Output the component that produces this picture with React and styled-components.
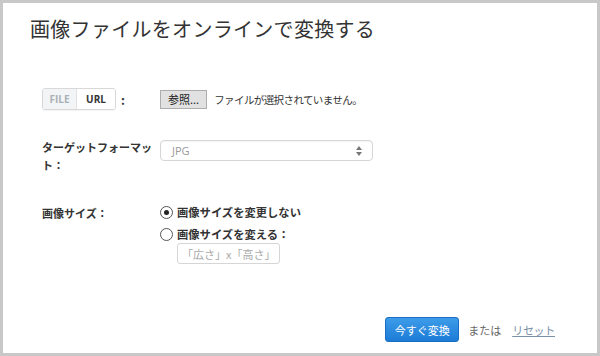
import React from 'react'
import styled, { createGlobalStyle } from 'styled-components'

const Global = createGlobalStyle`
  html, body { margin: 0; padding: 0; background: #fff; }
  body { font-family: "Open Sans", "Noto Sans CJK JP", sans-serif; color: #333; }
`

const Frame = styled.div`
  box-sizing: border-box;
  width: 600px;
  height: 356px;
  border: 3px solid #c8c8c8;
  background: #fff;
  display: flex;
  flex-direction: column;
`

const Title = styled.h1`
  margin: 0;
  padding: 12px 0 0 27px;
  font-size: 20px;
  line-height: 28px;
  font-weight: 400;
  color: #333;
  font-family: "Noto Sans CJK JP", sans-serif;
  letter-spacing: 0.3px;
`

const Form = styled.div`
  display: flex;
  flex-direction: column;
  padding: 45px 0 0 39px;
  flex: 1;
`

const Row = styled.div`
  display: grid;
  grid-template-columns: 118px 1fr;
  align-items: ${p => p.$align || 'center'};
  margin-bottom: ${p => p.$gap || 0}px;
`

const Label = styled.div`
  font-family: "Noto Sans CJK JP", sans-serif;
  font-size: 11px;
  font-weight: 700;
  line-height: 18px;
  color: #333;
  white-space: nowrap;
`

const Toggle = styled.div`
  display: flex;
  align-items: center;
  gap: 5px;
`

const Switch = styled.div`
  display: flex;
  border: 1px solid #d8d8d8;
  border-radius: 3px;
  overflow: hidden;
  height: 20px;
  box-shadow: 0 1px 1px rgba(0,0,0,0.05);
`

const SwitchPart = styled.span`
  display: flex;
  align-items: center;
  justify-content: center;
  width: ${p => p.$w}px;
  font-size: 10px;
  font-weight: 700;
  color: ${p => (p.$active ? '#333' : '#a9b0b8')};
  background: ${p => (p.$active ? '#fff' : '#f3f4f5')};
  border-left: ${p => (p.$active ? '1px solid #e2e2e2' : 'none')};
`

const Colon = styled.span`
  font-family: "Noto Sans CJK JP", sans-serif;
  font-weight: 700;
  font-size: 12px;
`

const FileRow = styled.div`
  display: flex;
  align-items: center;
  gap: 7px;
  font-family: "Noto Sans CJK JP", sans-serif;
  font-size: 10.5px;
  letter-spacing: -0.6px;
  color: #333;
`

const BrowseButton = styled.button`
  height: 19px;
  padding: 0 7px;
  border: 1px solid #adadad;
  border-radius: 0;
  background: #e1e1e1;
  font-family: "Noto Sans CJK JP", sans-serif;
  font-size: 11px;
  letter-spacing: 0;
  color: #222;
  line-height: 17px;
`

const Select = styled.div`
  box-sizing: border-box;
  width: 213px;
  height: 21px;
  margin-top: 2px;
  border: 1px solid #d6d6d6;
  border-radius: 4px;
  box-shadow: inset 0 1px 2px rgba(0,0,0,0.04);
  display: flex;
  align-items: center;
  justify-content: space-between;
  padding: 0 10px 0 11px;
  font-size: 11px;
  color: #9a9a9a;
`

const Options = styled.div`
  display: flex;
  flex-direction: column;
  margin-top: -3px;
`

const Option = styled.label`
  display: flex;
  align-items: center;
  gap: 4px;
  font-family: "Noto Sans CJK JP", sans-serif;
  font-size: 11.3px;
  font-weight: 700;
  line-height: 22px;
  color: #333;
`

const Radio = styled.span`
  box-sizing: border-box;
  width: 13px;
  height: 13px;
  border-radius: 50%;
  border: 1px solid #555;
  display: flex;
  align-items: center;
  justify-content: center;
  &::after {
    content: '';
    width: 5px;
    height: 5px;
    border-radius: 50%;
    background: ${p => (p.$checked ? '#222' : 'transparent')};
  }
`

const SizeInput = styled.div`
  box-sizing: border-box;
  margin: -2px 0 0 17px;
  width: 103px;
  height: 21px;
  border: 1px solid #d6d6d6;
  border-radius: 3px;
  display: flex;
  align-items: center;
  padding-left: 4px;
  font-family: "Noto Sans CJK JP", sans-serif;
  font-size: 11px;
  color: #aaa;
`

const Footer = styled.div`
  display: flex;
  align-items: center;
  justify-content: flex-end;
  padding: 0 42px 11px 0;
  font-family: "Noto Sans CJK JP", sans-serif;
  font-size: 11px;
`

const Convert = styled.button`
  height: 25px;
  width: 74px;
  padding: 0;
  border: 1px solid #1a6fc2;
  border-radius: 3px;
  background: linear-gradient(#3d9ce9, #1c7bd6);
  color: #fff;
  font-family: "Noto Sans CJK JP", sans-serif;
  font-size: 11px;
  margin-right: 9px;
`

const Muted = styled.span`
  color: #666;
  margin-right: 11px;
`

const Link = styled.a`
  color: #7a90a8;
  text-decoration: underline;
  letter-spacing: -0.3px;
`

function Arrows() {
  return (
    <svg width="6" height="10" viewBox="0 0 6 10">
      <path d="M3 0L6 4H0Z" fill="#777" />
      <path d="M3 10L6 6H0Z" fill="#777" />
    </svg>
  )
}

export default function App() {
  return (
    <>
      <Global />
      <Frame>
        <Title>画像ファイルをオンラインで変換する</Title>
        <Form>
          <Row $gap={28}>
            <Toggle>
              <Switch>
                <SwitchPart $w={33}>FILE</SwitchPart>
                <SwitchPart $w={38} $active>URL</SwitchPart>
              </Switch>
              <Colon>:</Colon>
            </Toggle>
            <FileRow>
              <BrowseButton>参照...</BrowseButton>
              <span>ファイルが選択されていません。</span>
            </FileRow>
          </Row>
          <Row $align="start" $gap={30}>
            <Label>ターゲットフォーマッ<br />ト：</Label>
            <Select>
              <span>JPG</span>
              <Arrows />
            </Select>
          </Row>
          <Row $align="start">
            <Label>画像サイズ：</Label>
            <Options>
              <Option><Radio $checked />画像サイズを変更しない</Option>
              <Option><Radio />画像サイズを変える：</Option>
              <SizeInput>「広さ」x「高さ」</SizeInput>
            </Options>
          </Row>
        </Form>
        <Footer>
          <Convert>今すぐ変換</Convert>
          <Muted>または</Muted>
          <Link>リセット</Link>
        </Footer>
      </Frame>
    </>
  )
}
